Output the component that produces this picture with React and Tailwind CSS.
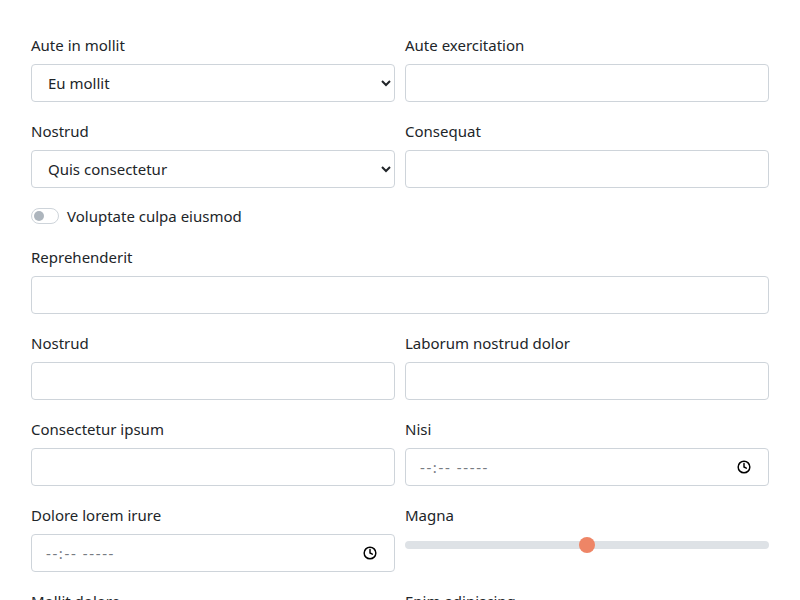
import React, { useState } from "react";
import { Clock } from "lucide-react";

const inputCls =
  "block w-full h-[38px] px-3 rounded-[4px] border border-[#ced4da] bg-white text-[15px] text-[#212529] outline-none";

const Field = ({ label, children }) => (
  <div className="mb-[17px]">
    <label className="block mb-[7px] leading-6 text-[15px] text-[#212529]">{label}</label>
    {children}
  </div>
);

const TimeBox = () => (
  <div className="flex items-center justify-between h-[38px] pl-[14px] pr-[17px] rounded-[4px] border border-[#ced4da] bg-white">
    <span className="text-[15px] text-[#777c82] tracking-[1.6px]">--:-- -----</span>
    <Clock size={14} strokeWidth={2.5} className="text-black" />
  </div>
);

const App = () => {
  const [on, setOn] = useState(false);

  return (
    <div
      className="px-[31px] pt-[33px] bg-white min-h-screen"
      style={{ fontFamily: '"Noto Sans", sans-serif' }}
    >
      <div className="grid grid-cols-2 gap-x-[10px]">
        <Field label="Aute in mollit">
          <select className={inputCls} defaultValue="Eu mollit">
            <option>Eu mollit</option>
            <option>Sint ad</option>
          </select>
        </Field>
        <Field label="Aute exercitation">
          <input type="text" className={inputCls} />
        </Field>
        <Field label="Nostrud">
          <select className={inputCls} defaultValue="Quis consectetur">
            <option>Quis consectetur</option>
            <option>Elit magna</option>
          </select>
        </Field>
        <Field label="Consequat">
          <input type="text" className={inputCls} />
        </Field>
      </div>

      <div className="flex items-center gap-2 h-6 -mt-px mb-[17px]">
        <button
          onClick={() => setOn(!on)}
          className="relative w-[28px] h-[16px] rounded-full border border-[#ced4da] bg-white"
        >
          <span className="absolute left-[2px] top-[2px] w-[10px] h-[10px] rounded-full bg-[#adb5bd]" />
        </button>
        <span className="text-[15px] text-[#212529]">Voluptate culpa eiusmod</span>
      </div>

      <Field label="Reprehenderit">
        <input type="text" className={inputCls} />
      </Field>

      <div className="grid grid-cols-2 gap-x-[10px]">
        <Field label="Nostrud">
          <input type="text" className={inputCls} />
        </Field>
        <Field label="Laborum nostrud dolor">
          <input type="text" className={inputCls} />
        </Field>
        <Field label="Consectetur ipsum">
          <input type="text" className={inputCls} />
        </Field>
        <Field label="Nisi">
          <TimeBox />
        </Field>
        <Field label="Dolore lorem irure">
          <TimeBox />
        </Field>
        <Field label="Magna">
          <div className="relative h-[22px] flex items-center">
            <div className="w-full h-2 rounded-full bg-[#dee2e6]" />
            <span className="absolute left-1/2 top-[3px] -ml-[8px] w-4 h-4 rounded-full bg-[#ee8566]" />
          </div>
        </Field>
        <Field label="Mollit dolore">
          <input type="text" className={inputCls} />
        </Field>
        <Field label="Enim adipiscing">
          <input type="text" className={inputCls} />
        </Field>
      </div>
    </div>
  );
};

export default App;
